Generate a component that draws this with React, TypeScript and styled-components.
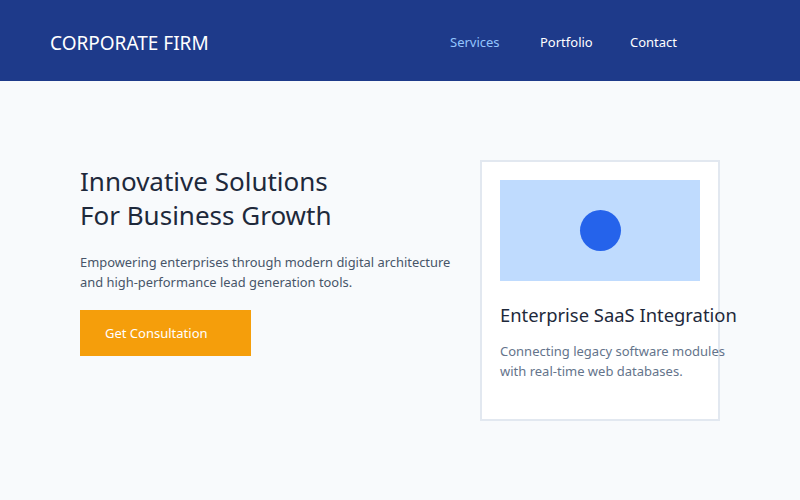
import styled, { createGlobalStyle } from 'styled-components';

const GlobalStyle = createGlobalStyle`
  * {
    box-sizing: border-box;
  }
  body {
    margin: 0;
    font-family: 'Noto Sans', 'Open Sans', sans-serif;
    background: #f8fafc;
  }
`;

const Header = styled.header`
  height: 81px;
  background: #1e3a8a;
  display: flex;
  align-items: center;
  justify-content: space-between;
  padding: 2px 80px 0 50px;
`;

const Logo = styled.div`
  color: #ffffff;
  font-size: 19px;
  font-weight: 400;
  padding-top: 2px;
`;

const Nav = styled.nav`
  display: grid;
  grid-template-columns: repeat(3, 90px);
`;

type NavLinkProps = {
  $active?: boolean;
};

const NavLink = styled.a<NavLinkProps>`
  color: ${(props) => (props.$active ? '#93c5fd' : '#ffffff')};
  font-size: 13px;
  text-decoration: none;
`;

const Hero = styled.main`
  min-height: 419px;
  display: flex;
  align-items: flex-start;
  gap: 20px;
  padding: 79px 80px;
`;

const HeroText = styled.div`
  width: 380px;
  flex-shrink: 0;
`;

const Title = styled.h1`
  margin: 0 0 20px;
  padding-top: 4px;
  font-size: 26px;
  font-weight: 400;
  line-height: 34px;
  color: #1e293b;
`;

const Lead = styled.p`
  margin: 0 0 18px;
  font-size: 12.9px;
  line-height: 20px;
  color: #475569;
`;

const CtaButton = styled.button`
  width: 171px;
  height: 46px;
  padding: 0 0 0 25px;
  border: none;
  background: #f59e0b;
  color: #ffffff;
  font-family: inherit;
  font-size: 13px;
  text-align: left;
  cursor: pointer;
`;

const Card = styled.div`
  width: 240px;
  height: 261px;
  flex-shrink: 0;
  background: #ffffff;
  border: 2px solid #e2e8f0;
  padding: 18px;
`;

const CardMedia = styled.div`
  height: 101px;
  background: #bfdbfe;
  display: flex;
  align-items: center;
  justify-content: center;
`;

const Dot = styled.div`
  width: 41px;
  height: 41px;
  border-radius: 50%;
  background: #2563eb;
`;

const CardTitle = styled.h3`
  margin: 20px 0 12px;
  font-size: 18.4px;
  font-weight: 400;
  line-height: 28px;
  color: #1e293b;
  white-space: nowrap;
`;

const CardText = styled.p`
  width: 232px;
  margin: 0;
  font-size: 13px;
  line-height: 20px;
  color: #64748b;
`;

const App = () => {
  return (
    <>
      <GlobalStyle />
      <Header>
        <Logo>CORPORATE FIRM</Logo>
        <Nav>
          <NavLink href="#" $active>
            Services
          </NavLink>
          <NavLink href="#">Portfolio</NavLink>
          <NavLink href="#">Contact</NavLink>
        </Nav>
      </Header>
      <Hero>
        <HeroText>
          <Title>
            Innovative Solutions
            <br />
            For Business Growth
          </Title>
          <Lead>
            Empowering enterprises through modern digital architecture and
            high-performance lead generation tools.
          </Lead>
          <CtaButton>Get Consultation</CtaButton>
        </HeroText>
        <Card>
          <CardMedia>
            <Dot />
          </CardMedia>
          <CardTitle>Enterprise SaaS Integration</CardTitle>
          <CardText>
            Connecting legacy software modules with real-time web databases.
          </CardText>
        </Card>
      </Hero>
    </>
  );
};

export default App;
